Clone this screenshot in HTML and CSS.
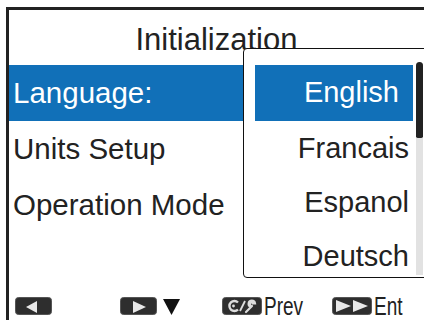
FILE: index.html
```html
<!DOCTYPE html>
<html lang="en">
<head>
    <meta charset="UTF-8">
    <meta name="viewport" content="width=device-width, initial-scale=1.0">
    <title>Initialization</title>
    <link rel="stylesheet" href="styles.css">
</head>
<body>
    <div class="screen">
        <h1 class="title">Initialization</h1>

        <ul class="menu">
            <li class="menu-item selected">Language:</li>
            <li class="menu-item">Units Setup</li>
            <li class="menu-item">Operation Mode</li>
        </ul>

        <!-- language picker popup -->
        <div class="dropdown">
            <ul class="options">
                <li class="option selected">English</li>
                <li class="option">Francais</li>
                <li class="option">Espanol</li>
                <li class="option">Deutsch</li>
            </ul>
            <div class="scrollbar">
                <div class="thumb"></div>
            </div>
        </div>

        <div class="footer">
            <div class="key-group">
                <svg class="key" width="37" height="18" viewBox="0 0 37 18">
                    <rect x="0.5" y="0.5" width="36" height="17" rx="3" fill="#2e2e2e" stroke="#555"/>
                    <polygon points="11,10 22,4 22,16" fill="#e8e8e8"/>
                </svg>
            </div>
            <div class="key-group">
                <svg class="key" width="37" height="18" viewBox="0 0 37 18">
                    <rect x="0.5" y="0.5" width="36" height="17" rx="3" fill="#2e2e2e" stroke="#555"/>
                    <polygon points="13,4 26,10 13,16" fill="#e8e8e8"/>
                </svg>
                <svg class="arrow-down" width="17" height="17" viewBox="0 0 17 17">
                    <polygon points="0,1 17,1 8.5,17" fill="#111"/>
                </svg>
            </div>
            <div class="key-group">
                <svg class="key" width="40" height="18" viewBox="0 0 40 18">
                    <rect x="0.5" y="0.5" width="39" height="17" rx="3" fill="#2e2e2e" stroke="#555"/>
                    <path d="M16 5.5 A5 5 0 1 0 16 12.5" fill="none" stroke="#ddd" stroke-width="2.4"/>
                    <circle cx="11.5" cy="9" r="1.4" fill="#ddd"/>
                    <line x1="18" y1="14" x2="23" y2="4" stroke="#ddd" stroke-width="1.8"/>
                    <path d="M24 15 L30 9 M29 10 A3.2 3.2 0 1 1 33 6.5 L31 6.5 L31 4.5 A3.2 3.2 0 0 0 29 10" fill="#ddd" stroke="#ddd" stroke-width="2.2" stroke-linecap="round"/>
                </svg>
                <span class="label">Prev</span>
            </div>
            <div class="key-group">
                <svg class="key" width="40" height="18" viewBox="0 0 40 18">
                    <rect x="0.5" y="0.5" width="39" height="17" rx="3" fill="#2e2e2e" stroke="#555"/>
                    <polygon points="4,3 19,9 4,15" fill="#e8e8e8"/>
                    <polygon points="21,3 36,9 21,15" fill="#e8e8e8"/>
                </svg>
                <span class="label">Ent</span>
            </div>
        </div>
    </div>
</body>
</html>
```

FILE: styles.css
```css
html, body {
    margin: 0;
    padding: 0;
    height: 100%;
    overflow: hidden;
    background-color: #fff;
}
body {
    font-family: 'Liberation Sans', Arial, sans-serif;
    color: #222;
}
.screen {
    position: relative;
    margin: 7px 0 0 6px;
    border-left: 3px solid #222;
    border-top: 3px solid #222;
    height: 310px;
    display: flex;
    flex-direction: column;
}
.title {
    margin: 0;
    height: 55px;
    box-sizing: border-box;
    padding-top: 12px;
    font-size: 31px;
    font-weight: normal;
    line-height: 35px;
    text-align: center;
}
.menu, .options {
    list-style: none;
    margin: 0;
    padding: 0;
}
.menu-item {
    height: 56px;
    line-height: 56px;
    padding-left: 4px;
    font-size: 29.5px;
}
.menu-item.selected, .option.selected {
    background-color: #1170b8;
    color: #fff;
}
.dropdown {
    position: absolute;
    left: 234px;
    top: 38px;
    right: -10px;
    bottom: 42px;
    background-color: #fff;
    border: 1px solid #111;
    border-radius: 4px;
    padding: 16px 0 0 11px;
    display: flex;
    align-items: flex-start;
}
.options {
    width: 158px;
}
.option {
    height: 54px;
    line-height: 54px;
    padding-right: 4px;
    text-align: right;
    font-size: 29px;
}
.option.selected {
    height: 56px;
    line-height: 54px;
    padding-right: 14px;
}
.scrollbar {
    margin: -3px 0 0 3px;
    width: 7px;
    height: 213px;
    background-color: #e2e2e2;
    border-radius: 4px 4px 0 0;
}
.thumb {
    height: 76px;
    background-color: #222;
    border-radius: 4px 4px 2px 2px;
}
.footer {
    margin-top: auto;
    padding: 0 0 4px 6px;
    display: grid;
    grid-template-columns: 105px 102px 110px auto;
    align-items: center;
}
.key-group {
    display: flex;
    align-items: center;
}
.key {
    display: block;
}
.arrow-down {
    display: block;
    margin-left: 6px;
}
.label {
    display: inline-block;
    margin-left: 2px;
    font-size: 25px;
    line-height: 20px;
    color: #222;
    transform: scaleX(0.76);
    transform-origin: left center;
}
```
